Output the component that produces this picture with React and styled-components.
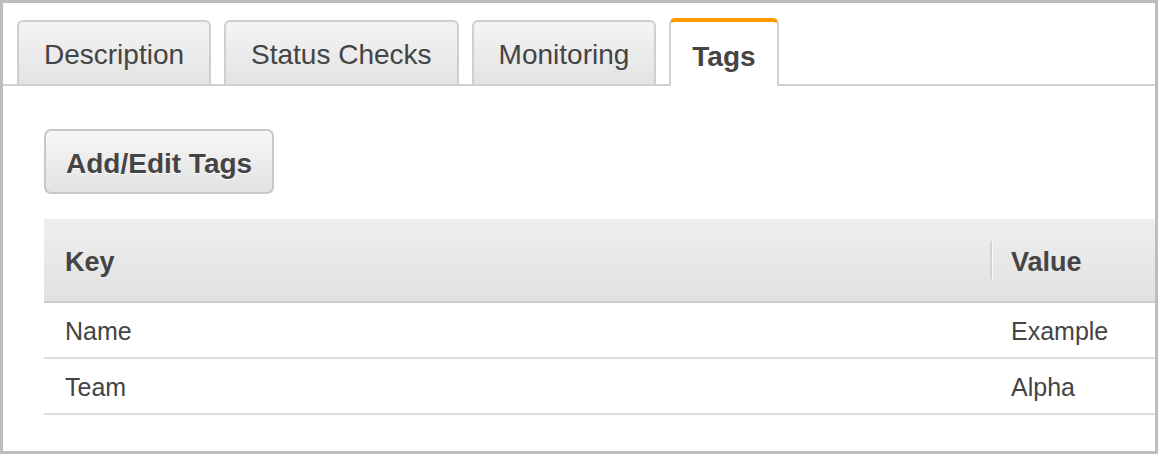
import styled, { createGlobalStyle } from "styled-components";
import { useState } from "react";

const tabs = ["Description", "Status Checks", "Monitoring", "Tags"];

const tags = [
  { key: "Name", value: "Example" },
  { key: "Team", value: "Alpha" },
];

export default function App() {
  const [active, setActive] = useState("Tags");

  return (
    <>
      <GlobalStyle />
      <Frame>
        <TabStrip>
          {tabs.map((name) => (
            <Tab key={name} active={name === active} onClick={() => setActive(name)}>
              {name}
            </Tab>
          ))}
        </TabStrip>

        <Panel>
          <Button>Add/Edit Tags</Button>

          <Table>
            <thead>
              <tr>
                <HeadCell>Key</HeadCell>
                <HeadCell divider>Value</HeadCell>
              </tr>
            </thead>
            <tbody>
              {tags.map((tag) => (
                <tr key={tag.key}>
                  <Cell>{tag.key}</Cell>
                  <Cell>{tag.value}</Cell>
                </tr>
              ))}
            </tbody>
          </Table>
        </Panel>
      </Frame>
    </>
  );
}

const GlobalStyle = createGlobalStyle`
  * {
    box-sizing: border-box;
  }

  body {
    margin: 0;
    background: #fff;
    font-family: "Liberation Sans", Arial, sans-serif;
    color: #444;
  }
`;

const Frame = styled.div`
  width: 1158px;
  height: 454px;
  border: 3px solid #bdbdbd;
  overflow: hidden;
  background: #fff;
`;

const TabStrip = styled.div`
  display: flex;
  align-items: flex-end;
  gap: 13px;
  height: 83px;
  padding-left: 14px;
  border-bottom: 2px solid #d0d0d0;
`;

const Tab = styled.div`
  display: flex;
  align-items: center;
  justify-content: center;
  height: ${(props) => (props.active ? "68px" : "64px")};
  margin-bottom: ${(props) => (props.active ? "-2px" : "0")};
  padding: ${(props) => (props.active ? "6px 21px 0" : "4px 25px 0")};
  border: 2px solid #cfcfcf;
  border-top: ${(props) => (props.active ? "4px solid #ff9900" : "2px solid #cfcfcf")};
  border-bottom: none;
  border-radius: 6px 6px 0 0;
  background: ${(props) =>
    props.active ? "#fff" : "linear-gradient(#f4f4f4, #e3e3e3)"};
  font-size: 28px;
  font-weight: ${(props) => (props.active ? 700 : 400)};
  color: #444;
  cursor: pointer;
  white-space: nowrap;
`;

const Panel = styled.div`
  padding: 43px 0 0 41px;
`;

const Button = styled.button`
  display: flex;
  align-items: center;
  height: 65px;
  padding: 5px 20px 0;
  border: 2px solid #c8c8c8;
  border-radius: 7px;
  background: linear-gradient(#f7f7f7, #e2e2e2);
  font-family: "Liberation Sans", Arial, sans-serif;
  font-size: 28px;
  font-weight: 700;
  color: #444;
  text-shadow: 0 1px 0 #fff;
  cursor: pointer;
`;

const Table = styled.table`
  width: 1111px;
  margin-top: 25px;
  border-collapse: collapse;
  table-layout: fixed;

  th:first-child,
  td:first-child {
    width: 946px;
  }
`;

const HeadCell = styled.th`
  position: relative;
  height: 83px;
  padding: 5px 0 0 21px;
  text-align: left;
  font-size: 27px;
  font-weight: 700;
  color: #444;
  background: linear-gradient(#efefef, #e1e1e1);
  border-bottom: 2px solid #cbcbcb;

  &::before {
    content: "";
    display: ${(props) => (props.divider ? "block" : "none")};
    position: absolute;
    left: 0;
    top: 22px;
    width: 2px;
    height: 38px;
    background: #d2d2d2;
    box-shadow: 1px 0 0 #f8f8f8;
  }
`;

const Cell = styled.td`
  height: 56px;
  padding: 2px 0 0 21px;
  font-size: 25px;
  color: #444;
  border-bottom: 2px solid #dcdcdc;
`;
